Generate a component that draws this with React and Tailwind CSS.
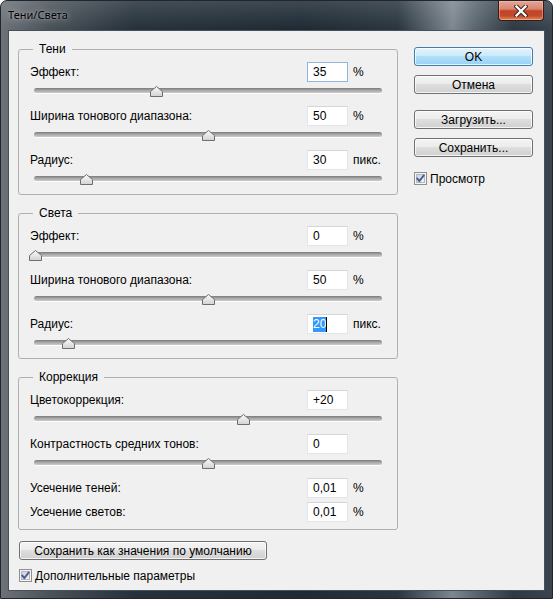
import React from "react";

// Thumb of a trackbar: a small "house" shape pointing up
function Thumb({ center }) {
  return (
    <svg
      className="absolute top-[4px]"
      style={{ left: center - 30 - 6 }}
      width="13"
      height="11"
      viewBox="0 0 13 11"
    >
      <defs>
        <linearGradient id="thumbFill" x1="0" y1="0" x2="0" y2="1">
          <stop offset="0" stopColor="#fbfbfb" />
          <stop offset="1" stopColor="#d2d2d2" />
        </linearGradient>
      </defs>
      <path
        d="M0.5 5.5 L6.5 0.5 L12.5 5.5 V10.5 H0.5 Z"
        fill="url(#thumbFill)"
        stroke="#6e6e6e"
        strokeLinejoin="round"
      />
    </svg>
  );
}

function Slider({ center }) {
  return (
    <div className="relative h-[24px] px-[4px] pt-[6px]">
      <div className="h-[5px] rounded-[3px] bg-[linear-gradient(to_bottom,#7a7a7a,#a6a6a6_45%,#cbcbcb)] shadow-[0_1px_0_rgba(255,255,255,0.9)]" />
      <Thumb center={center} />
    </div>
  );
}

function Field({ label, value, unit, focus, selected }) {
  return (
    <div className="flex h-[20px] items-center">
      <span className="w-[277px]">{label}</span>
      <div
        className={
          focus
            ? "flex h-[20px] w-[41px] items-center border border-[#8fb6dc] bg-white pl-[5px]"
            : "flex h-[20px] w-[41px] items-center border border-[#e2e6ea] border-t-[#d2d5da] bg-white pl-[5px]"
        }
      >
        {selected ? (
          <span className="bg-[#3399ff] leading-[15px] text-white">{value}</span>
        ) : (
          value
        )}
        {selected && <span className="h-[15px] w-px bg-black" />}
      </div>
      {unit && <span className="ml-[5px]">{unit}</span>}
    </div>
  );
}

function Group({ title, children, className }) {
  return (
    <fieldset className={"rounded-[3px] border border-[#b0b0b0] " + className}>
      <legend className="ml-[14px] px-[6px] leading-[14px]">{title}</legend>
      {children}
    </fieldset>
  );
}

function Button({ children, primary, className }) {
  return (
    <button
      className={
        (primary
          ? "border-[#3c7fb1] bg-[linear-gradient(to_bottom,#e3f4fd_0%,#cdeafb_45%,#b0dff9_50%,#98d2f3_100%)] "
          : "border-[#707070] bg-[linear-gradient(to_bottom,#f4f4f4_0%,#ececec_45%,#dedede_50%,#d0d0d0_100%)] ") +
        "flex h-[19px] items-center justify-center rounded-[3px] border text-[12px] leading-none text-black shadow-[inset_0_0_0_1px_rgba(255,255,255,0.75)] " +
        className
      }
    >
      {children}
    </button>
  );
}

function Check({ label, className }) {
  return (
    <label className={"flex h-[13px] items-center " + className}>
      <svg width="13" height="13" viewBox="0 0 13 13">
        <defs>
          <linearGradient id="boxFill" x1="0" y1="0" x2="1" y2="1">
            <stop offset="0" stopColor="#cbcfd5" />
            <stop offset="1" stopColor="#f6f6f6" />
          </linearGradient>
        </defs>
        <rect x="0.5" y="0.5" width="12" height="12" fill="#f4f4f4" stroke="#8e8f8f" />
        <rect x="2.5" y="2.5" width="8" height="8" fill="url(#boxFill)" stroke="#b3b8be" />
        <path
          d="M3.2 6.4 L5.3 9.2 L9.8 3.4"
          fill="none"
          stroke="#4a5d98"
          strokeWidth="1.9"
          strokeLinecap="round"
          strokeLinejoin="round"
        />
      </svg>
      <span className="ml-[3px] leading-[14px]">{label}</span>
    </label>
  );
}

function CloseButton() {
  return (
    <div className="mr-[8px] flex h-[20px] w-[46px] items-center justify-center rounded-b-[4px] border border-t-0 border-[#3d1b15] bg-[linear-gradient(to_bottom,#e7a596,#d88672_42%,#c3432a_52%,#c24a2c_78%,#e48b5b)] shadow-[inset_0_0_0_1px_rgba(255,200,185,0.45)]">
      <svg width="14" height="12" viewBox="0 0 14 12">
        <path d="M2.5 1.5 L11.5 10.5 M11.5 1.5 L2.5 10.5" stroke="#3a2420" strokeWidth="4.2" strokeLinecap="square" />
        <path d="M2.5 1.5 L11.5 10.5 M11.5 1.5 L2.5 10.5" stroke="#ffffff" strokeWidth="2.3" strokeLinecap="square" />
      </svg>
    </div>
  );
}

// Percent sliders: 0% sits at x=35, 100% at x=381
const pct = (v) => 35 + v * 3.46;

export default function App() {
  return (
    <div className="flex h-[599px] w-[553px] flex-col overflow-hidden rounded-t-[7px] border border-[#20262c] bg-[linear-gradient(to_bottom,rgba(255,255,255,0.14),rgba(255,255,255,0)_28px),linear-gradient(to_right,#6c7278,#4a5259_9%,#26313b_24%,#1f2a34_55%,#2a353f_72%,#7d8790_82%,#5b6670_86%,#2e3943_93%,#39444f)] font-['Liberation_Sans',Arial,sans-serif] text-[12px] text-black">
      {/* title bar */}
      <div className="flex h-[29px] shrink-0 items-start justify-between">
        <span className="pl-[7px] pt-[7px] font-['Noto_Sans',sans-serif] text-[11px] leading-[14px] text-black [text-shadow:0_0_6px_rgba(255,255,255,0.55),0_0_2px_rgba(255,255,255,0.35)]">
          Тени/Света
        </span>
        <CloseButton />
      </div>

      {/* client area */}
      <div className="mx-[7px] mb-[7px] flex flex-1 border border-[#46515c] bg-[#f0f0f0] pl-[9px] pt-[11px]">
        <div className="flex w-[380px] flex-col">
          <Group title="Тени">
            <div className="px-[11px] pt-[6px]">
              <Field label="Эффект:" value="35" unit="%" focus />
              <Slider center={pct(35)} />
              <Field label="Ширина тонового диапазона:" value="50" unit="%" />
              <Slider center={pct(50)} />
              <Field label="Радиус:" value="30" unit="пикс." />
              <Slider center={86} />
            </div>
          </Group>

          <Group title="Света" className="mt-[11px]">
            <div className="px-[11px] pt-[6px]">
              <Field label="Эффект:" value="0" unit="%" />
              <Slider center={pct(0)} />
              <Field label="Ширина тонового диапазона:" value="50" unit="%" />
              <Slider center={pct(50)} />
              <Field label="Радиус:" value="20" unit="пикс." selected />
              <Slider center={68} />
            </div>
          </Group>

          <Group title="Коррекция" className="mt-[11px]">
            <div className="px-[11px] pb-[7px] pt-[6px]">
              <Field label="Цветокоррекция:" value="+20" />
              <Slider center={pct(60)} />
              <Field label="Контрастность средних тонов:" value="0" />
              <Slider center={pct(50)} />
              <Field label="Усечение теней:" value="0,01" unit="%" />
              <div className="mt-[4px]">
                <Field label="Усечение светов:" value="0,01" unit="%" />
              </div>
            </div>
          </Group>

          <Button className="ml-px mt-[11px] w-[248px]">Сохранить как значения по умолчанию</Button>
          <Check label="Дополнительные параметры" className="ml-px mt-[9px]" />
        </div>

        <div className="ml-[16px] flex w-[119px] flex-col pt-[5px]">
          <Button primary>OK</Button>
          <Button className="mt-[9px]">Отмена</Button>
          <Button className="mt-[16px]">Загрузить...</Button>
          <Button className="mt-[9px]">Сохранить...</Button>
          <Check label="Просмотр" className="mt-[15px]" />
        </div>
      </div>
    </div>
  );
}
